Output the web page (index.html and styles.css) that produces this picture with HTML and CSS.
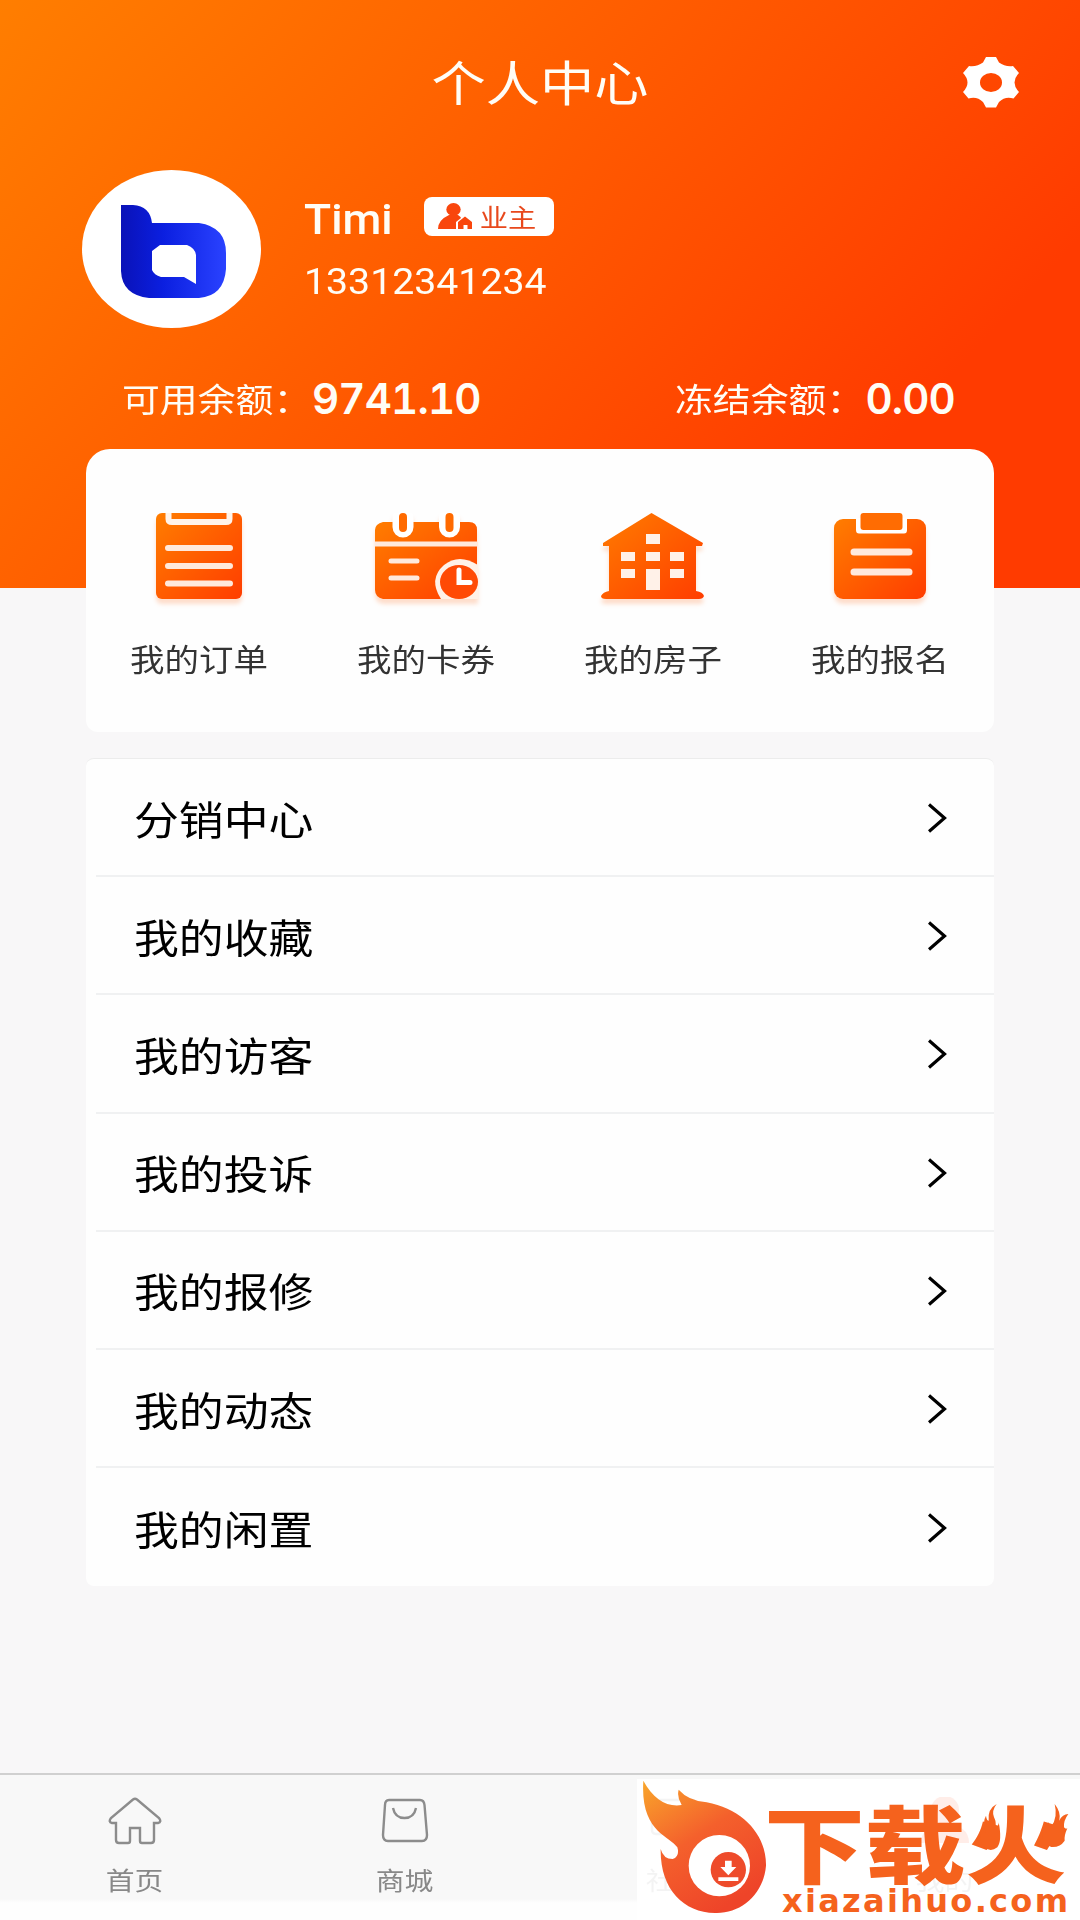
FILE: index.html
```html
<!doctype html>
<html lang="zh-CN">
  <head>
    <meta charset="UTF-8" />
    <meta name="viewport" content="width=device-width, initial-scale=1.0" />
    <title>个人中心</title>
    <link rel="stylesheet" href="styles.css">
  </head>
  <body>
    <!-- shared gradients -->
    <svg class="defs" width="0" height="0">
      <defs>
        <linearGradient id="orange" x1="0" y1="0" x2="1" y2="1">
          <stop offset="0" stop-color="#ff7d00" />
          <stop offset="1" stop-color="#ff3d00" />
        </linearGradient>
        <linearGradient id="blue" x1="0" y1="0" x2="1" y2="0">
          <stop offset="0" stop-color="#0a12b8" />
          <stop offset="0.4" stop-color="#0b1fe0" />
          <stop offset="1" stop-color="#2a42ff" />
        </linearGradient>
        <linearGradient id="flame" x1="0" y1="0" x2="0.6" y2="1">
          <stop offset="0" stop-color="#f9a62b" />
          <stop offset="0.5" stop-color="#f4602c" />
          <stop offset="1" stop-color="#ee4429" />
        </linearGradient>
      </defs>
    </svg>

    <header class="header">
      <div class="title-bar">
        <h1 class="stretch">个人中心</h1>
        <svg class="gear" width="56" height="51" viewBox="0 0 56 51">
          <path fill="#fff" fill-rule="evenodd" d="M23 0H33L36 5.5Q42 10 50 9L56 16Q47 25.5 56 35L50.5 41.5Q42 39 36 45L33 50.5H23L20 45Q14 39 5.5 41.5L0 35Q9 25.5 0 16L6 9Q14 10 20 5.5ZM28 16A11 9.5 0 1 0 28 35A11 9.5 0 1 0 28 16Z" />
        </svg>
      </div>

      <div class="profile">
        <div class="avatar">
          <svg width="105" height="93" viewBox="0 0 105 93">
            <path fill="url(#blue)" fill-rule="evenodd" d="M0 0H12Q29 1 31 18H78Q105 22 105 48V64Q103 91 78 93H28Q1 90 0 66ZM39 40H66Q74 43 75 50V79L63 72H40Q33 70 31 65V46Z" />
          </svg>
        </div>
        <div class="profile-info">
          <div class="name-row">
            <span class="name">Timi</span>
            <span class="badge">
              <svg width="34" height="27" viewBox="0 0 34 27">
                <g fill="#f9460d">
                  <ellipse cx="15.5" cy="6.5" rx="7.2" ry="6.5" />
                  <path d="M0 26Q0 17 11 12H20Q23 14 23 15L18 19V26Z" />
                  <path d="M20 26V19L27 13.5L34 19V26H29.5V22H25.5V26Z" />
                </g>
              </svg>
              <span class="badge-text stretch">业主</span>
            </span>
          </div>
          <div class="phone">13312341234</div>
        </div>
      </div>

      <div class="balances">
        <div class="balance">
          <span class="balance-label stretch">可用余额：</span>
          <span class="balance-value">9741.10</span>
        </div>
        <div class="balance">
          <span class="balance-label stretch">冻结余额：</span>
          <span class="balance-value">0.00</span>
        </div>
      </div>
    </header>

    <section class="card shortcuts">
      <div class="shortcut">
        <svg width="86" height="86" viewBox="0 0 86 86">
          <rect width="86" height="86" rx="6" fill="url(#orange)" />
          <path d="M12.5 -2V6Q12.5 9 16 9H70Q73.500 9 73.500 6V-2" fill="none" stroke="#fff3ea" stroke-width="6" />
          <path d="M12 35H74M12 53H74M12 70.500H74" stroke="#ffe9dc" stroke-width="6" stroke-linecap="round" />
        </svg>
        <span class="stretch">我的订单</span>
      </div>
      <div class="shortcut">
        <svg width="103" height="86" viewBox="0 0 103 86">
          <path d="M8 9H94Q102 9 102 17V86H8Q0 84 0 77V17Q0 11 8 9Z" fill="url(#orange)" />
          <path d="M28 5V14M74.500 5V14" stroke="#fff" stroke-width="21" stroke-linecap="round" />
          <path d="M28 4V15M74.500 4V15" stroke="#ff6a00" stroke-width="8" stroke-linecap="round" />
          <path d="M0 31H103" stroke="#ffe9dc" stroke-width="5" />
          <path d="M16 48H42M16 65H42" stroke="#ffe9dc" stroke-width="5" stroke-linecap="round" />
          <path d="M103 52Q84 40 69 52Q53 66 66 86H103Z" fill="#fff1e8" />
          <ellipse cx="84" cy="69" rx="19" ry="17" fill="#ff4a05" />
          <path d="M84 57V69.500H95" fill="none" stroke="#fff" stroke-width="5" stroke-linecap="round" />
        </svg>
        <span class="stretch">我的卡券</span>
      </div>
      <div class="shortcut">
        <svg width="103" height="86" viewBox="0 0 103 86">
          <path d="M50.500 0L102 30L101 33H95V78Q102 79 103 83Q102 86 98 86H5Q0 86 0 83Q2 79 8 78V33H2L2 30Z" fill="url(#orange)" />
          <path d="M45 21H59V31H45ZM20 39H34V48H20ZM45 39H59V48H45ZM69 39H83V48H69ZM20 56H34V65H20ZM69 56H83V65H69ZM45 56H59V77H45Z" fill="#fff1e8" />
        </svg>
        <span class="stretch">我的房子</span>
      </div>
      <div class="shortcut">
        <svg width="92" height="86" viewBox="0 0 92 86">
          <rect y="6" width="92" height="80" rx="9" fill="url(#orange)" />
          <path d="M22 5H73V17Q73 20.500 70 20.500H25Q22 20.500 22 17Z" fill="#fff" />
          <rect x="26.500" width="42" height="17" rx="3" fill="#ff6c02" />
          <path d="M20 39H75M20 59H75" stroke="#ffe9dc" stroke-width="7" stroke-linecap="round" />
        </svg>
        <span class="stretch">我的报名</span>
      </div>
    </section>

    <ul class="card menu">
      <li><span class="stretch">分销中心</span><svg class="chevron" viewBox="0 0 19 30"><path d="M1 1.500L16.500 15L1 28.500" /></svg></li>
      <li><span class="stretch">我的收藏</span><svg class="chevron" viewBox="0 0 19 30"><path d="M1 1.500L16.500 15L1 28.500" /></svg></li>
      <li><span class="stretch">我的访客</span><svg class="chevron" viewBox="0 0 19 30"><path d="M1 1.500L16.500 15L1 28.500" /></svg></li>
      <li><span class="stretch">我的投诉</span><svg class="chevron" viewBox="0 0 19 30"><path d="M1 1.500L16.500 15L1 28.500" /></svg></li>
      <li><span class="stretch">我的报修</span><svg class="chevron" viewBox="0 0 19 30"><path d="M1 1.500L16.500 15L1 28.500" /></svg></li>
      <li><span class="stretch">我的动态</span><svg class="chevron" viewBox="0 0 19 30"><path d="M1 1.500L16.500 15L1 28.500" /></svg></li>
      <li><span class="stretch">我的闲置</span><svg class="chevron" viewBox="0 0 19 30"><path d="M1 1.500L16.500 15L1 28.500" /></svg></li>
    </ul>

    <nav class="tabbar">
      <div class="tab">
        <svg width="54" height="48" viewBox="0 0 54 48">
          <path d="M25 2.500Q27 1 29 2.500L51 21Q54 25 50 26H46V43Q46 46 43 46H34Q32 46 32 44V31H22V44Q22 46 20 46H11Q8 46 8 43V26H4Q0 25 3 21Z" />
        </svg>
        <span class="stretch">首页</span>
      </div>
      <div class="tab">
        <svg width="54" height="48" viewBox="0 0 54 48">
          <path d="M11 3H42Q46 3 46.500 8L49 38Q49 44 44 44H10Q5 44 5 38L7 8Q7 3 11 3ZM15 11Q17 21 26.500 21Q36 21 38 11" />
        </svg>
        <span class="stretch">商城</span>
      </div>
      <div class="tab">
        <svg width="54" height="48" viewBox="0 0 54 48">
          <path d="M8 3H44Q48 3 48 7V33Q48 37 44 37H34L27 43L20 37H8Q4 37 4 33V7Q4 3 8 3ZM15 15H38M15 25H38" />
        </svg>
        <span class="stretch">社区</span>
      </div>
      <div class="tab active">
        <svg width="54" height="48" viewBox="0 0 54 48">
          <circle cx="27" cy="13" r="14" />
          <path d="M3 46Q3 28 27 27Q51 28 51 46Z" />
        </svg>
        <span class="stretch">我的</span>
      </div>

      <div class="promo">
        <svg class="promo-logo" width="130" height="137" viewBox="60 30 390 411">
          <path fill="url(#flame)" d="M70 35C100 90 140 115 185 108Q170 85 176 62Q205 95 260 100C370 120 440 200 438 290C430 380 360 435 285 432C190 430 120 360 122 240Q130 270 158 270Q180 262 172 235C150 200 60 190 70 35Z" />
          <circle cx="298" cy="290" r="92" fill="#fff" />
          <circle cx="325" cy="302" r="53" fill="#ee4b2b" />
          <path fill="#fff" d="M315 275H335V294H349L325 319L301 294H315ZM295 325H355V336H295Z" />
        </svg>
        <div class="promo-words">
          <div class="promo-name">下载火</div>
          <div class="promo-site">xiazaihuo.com</div>
        </div>
        <!-- flames in place of the two dots of 火 -->
        <svg class="promo-fire" width="94" height="52" viewBox="1072 96 282 156">
          <path d="M1128 105Q1112 125 1120 145Q1128 160 1124 175Q1135 170 1134 160Q1145 215 1130 235Q1108 252 1088 232Q1072 210 1084 180Q1086 190 1095 190Q1084 160 1096 140Q1098 155 1104 155Q1100 120 1128 105Z" />
          <path d="M1302 105Q1322 130 1316 155Q1325 135 1343 135Q1328 155 1330 175Q1335 182 1340 178Q1330 200 1332 215Q1318 236 1292 234Q1262 225 1264 195Q1268 170 1285 160Q1280 175 1292 172Q1312 145 1302 105Z" />
        </svg>
      </div>
    </nav>
  </body>
</html>
```
FILE: styles.css
```css
* {
  box-sizing: border-box;
}

body {
  margin: 0;
  width: 1080px;
  height: 1920px;
  overflow: hidden;
  display: flex;
  flex-direction: column;
  background: #f8f7f8;
  font-family: Roboto, 'Noto Sans CJK SC', sans-serif;
  color: #000;
}

svg {
  display: block;
  flex: none;
}

.defs {
  position: absolute;
}

/* type is set slightly wider than it is tall */
.stretch {
  display: inline-block;
  transform: scaleX(1.13);
  white-space: nowrap;
}

.header {
  height: 588px;
  flex: none;
  background: linear-gradient(133deg, #ff7e00 0%, #ff6000 36%, #ff3b00 80%);
  color: #fffdf6;
}

.title-bar {
  display: grid;
  grid-template-columns: 1fr auto 1fr;
  align-items: center;
  height: 164px;
  padding: 0 61px;
}

.title-bar h1 {
  grid-column: 2;
  margin: 0;
  padding-top: 6px;
  font-size: 48px;
  line-height: 64px;
  font-weight: 400;
}

.gear {
  justify-self: end;
}

.profile {
  display: flex;
  padding: 6px 82px 0;
}

.avatar {
  display: flex;
  align-items: center;
  justify-content: center;
  width: 179px;
  height: 158px;
  padding: 5px 0 0 3px;
  border-radius: 50%;
  background: #fff;
}

.profile-info {
  padding: 27px 0 0 43px;
}

.name-row {
  display: flex;
  height: 40px;
}

.name {
  width: 120px;
  font-size: 42px;
  line-height: 45px;
  font-weight: 500;
  transform: scaleX(1.06);
  transform-origin: left;
}

.badge {
  display: flex;
  align-items: center;
  width: 130px;
  height: 39px;
  padding-left: 14px;
  border-radius: 8px;
  background: #fff;
  color: #e8481c;
}

.badge-text {
  margin: 4px 0 0 11px;
  font-size: 25px;
  line-height: 36px;
}

.phone {
  margin-top: 25px;
  font-size: 36px;
  line-height: 40px;
  transform: scaleX(1.09);
  transform-origin: left;
}

.balances {
  display: flex;
  justify-content: space-between;
  padding: 47px 125px 0 122px;
}

.balance {
  display: flex;
  align-items: center;
  height: 48px;
}

.balance-label {
  width: 190px;
  padding-top: 3px;
  font-size: 33.5px;
  line-height: 48px;
  transform-origin: left;
}

.balance-value {
  font-family: Inter, Roboto, sans-serif;
  font-size: 42px;
  line-height: 48px;
  font-weight: 600;
  font-variant-numeric: tabular-nums;
  letter-spacing: -0.8px;
}

.card {
  width: 908px;
  margin: 0 86px;
  background: #fefefe;
  flex: none;
}

.shortcuts {
  display: grid;
  grid-template-columns: repeat(4, 1fr);
  height: 283px;
  margin-top: -139px;
  padding: 64px 1px 0 0;
  border-radius: 24px 24px 12px 12px;
}

.shortcut {
  display: flex;
  flex-direction: column;
  align-items: center;
  gap: 40px;
  color: #333;
  font-size: 30.5px;
  line-height: 44px;
}

.shortcut svg {
  filter: drop-shadow(0 5px 2px rgba(255, 90, 0, 0.2));
}

.menu {
  margin-top: 26px;
  padding: 0;
  list-style: none;
  border-radius: 8px;
  border-top: 1px solid #ececec;
}

.menu li {
  display: flex;
  align-items: center;
  justify-content: space-between;
  height: 118.2px;
  margin-left: 10px;
  padding: 2px 47px 0 38px;
  border-bottom: 2px solid #f0f1f2;
  font-size: 39.7px;
  line-height: 56px;
}

.menu li:last-child {
  border-bottom: none;
}

.menu .stretch {
  padding-top: 7px;
  transform-origin: left;
}

.chevron {
  width: 19px;
  height: 30px;
  fill: none;
  stroke: #000;
  stroke-width: 3.2;
}

.tabbar {
  position: relative;
  display: grid;
  grid-template-columns: repeat(4, 1fr);
  height: 147px;
  margin-top: auto;
  border-top: 2px solid #d0d0d0;
  background: linear-gradient(#f8f8f8 124px, #fefefe 128px);
}

.tab {
  display: flex;
  flex-direction: column;
  align-items: center;
  gap: 18px;
  padding: 22px 1px 0 0;
  color: #888;
  font-size: 25.5px;
  line-height: 36px;
}

.tab svg {
  fill: none;
  stroke: #8c8c8c;
  stroke-width: 2.4;
}

.tab.active svg {
  fill: #ff4a1c;
  stroke: none;
}

/* banner lies over the last two tabs, which show through faintly */
.promo {
  position: absolute;
  left: 637px;
  top: 4px;
  right: 0;
  bottom: 0;
  display: flex;
  padding-left: 3px;
  background: rgba(255, 255, 255, 0.9);
  color: #f5621d;
}

.promo-words {
  padding-top: 20px;
}

.promo-name {
  margin-left: -6px;
  font-family: 'Noto Sans CJK SC', sans-serif;
  font-weight: 900;
  font-size: 84px;
  line-height: 84px;
  transform: scaleX(1.2);
  transform-origin: left;
}

.promo-site {
  margin: 2px 0 0 12px;
  font-family: 'DejaVu Sans', sans-serif;
  font-weight: 700;
  font-size: 32px;
  line-height: 32px;
  letter-spacing: 2.3px;
}

.promo-fire {
  position: absolute;
  right: 8px;
  top: 22px;
  fill: #f5621d;
}
```
